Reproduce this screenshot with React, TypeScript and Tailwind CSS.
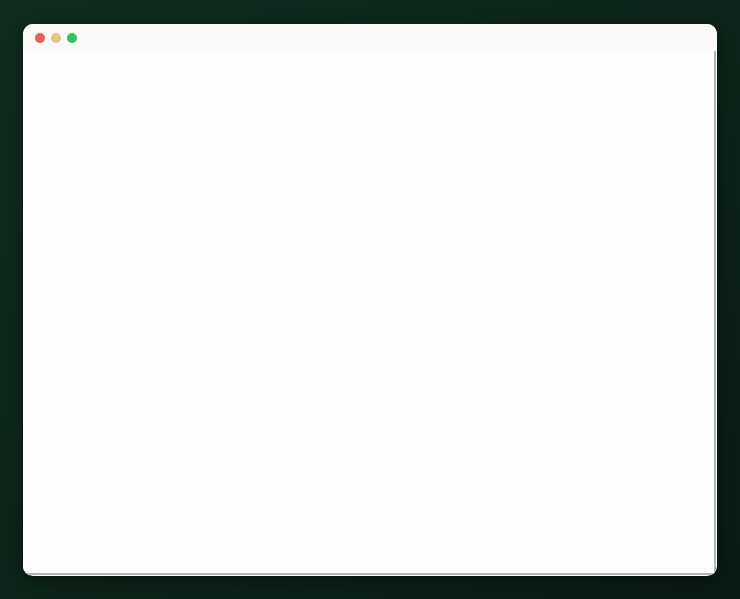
export default function App() {
  return (
    <div className="w-[740px] h-[599px] bg-gradient-to-br from-[#0f2c1f] via-[#0c2419] to-[#091a13] pt-[24px] pl-[23px]">
      <div className="w-[694px] h-[552px] bg-white rounded-[10px] overflow-hidden flex flex-col shadow-[0_4px_16px_rgba(0,0,0,0.4)]">
        <div className="h-[27px] shrink-0 bg-[#fbfaf8] flex items-center gap-[6px] pl-[12px]">
          <span className="w-[10px] h-[10px] rounded-full bg-[#f15b55]" />
          <span className="w-[10px] h-[10px] rounded-full bg-[#eec47c]" />
          <span className="w-[10px] h-[10px] rounded-full bg-[#2ec25c]" />
        </div>
        <div className="flex-1 bg-[#fffeff] border-r-[2px] border-b-[2px] border-[#b2b4b2] mr-[1px] mb-[1px]" />
      </div>
    </div>
  );
}
